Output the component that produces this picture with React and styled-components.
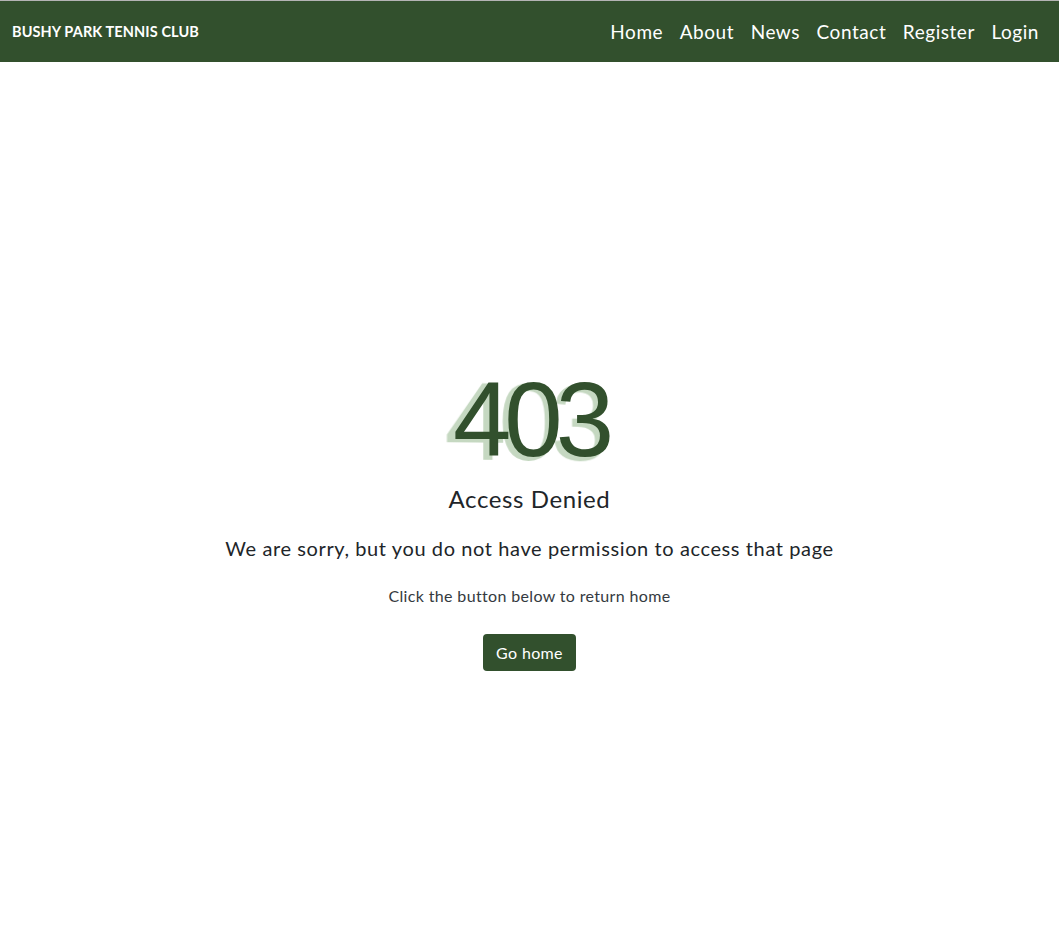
import React from 'react'
import styled, { createGlobalStyle } from 'styled-components'

const GlobalStyle = createGlobalStyle`
  html, body {
    margin: 0;
    padding: 0;
    background: #fff;
  }
  body {
    font-family: Lato, "Open Sans", sans-serif;
    color: #212529;
  }
  * {
    box-sizing: border-box;
  }
`

const Navbar = styled.nav`
  display: flex;
  align-items: center;
  justify-content: space-between;
  height: 62px;
  padding: 0 20px 0 12px;
  background: #32502d;
  border-top: 1px solid #b4b4b4;
`

const Brand = styled.a`
  color: #fff;
  font-size: 14.5px;
  font-weight: 700;
  text-decoration: none;
  letter-spacing: 0.1px;
`

const NavLinks = styled.ul`
  display: flex;
  gap: 16.5px;
  list-style: none;
  margin: 0;
  padding: 0;
`

const NavLink = styled.a`
  color: #fff;
  font-size: 19px;
  letter-spacing: 0.55px;
  text-decoration: none;
`

const Main = styled.main`
  display: flex;
  flex-direction: column;
  align-items: center;
  text-align: center;
  padding-top: 305.3px;
`

const ErrorCode = styled.h1`
  position: relative;
  margin: 0;
  font-family: "Liberation Sans", Arial, sans-serif;
  font-weight: 400;
  line-height: 1;
`

const CodeFront = styled.span`
  position: relative;
  z-index: 1;
  display: block;
  font-size: 105px;
  letter-spacing: -7px;
  padding-left: 1px;
  color: #32502d;
`

// pale copy sitting behind the digits, slightly larger and tilted
const CodeBack = styled.span`
  position: absolute;
  left: -7px;
  bottom: -4.6px;
  font-size: 110px;
  letter-spacing: -8px;
  white-space: nowrap;
  color: #c5d8c1;
  transform-origin: center bottom;
  transform: perspective(600px) rotateY(10deg);
`

const Title = styled.h2`
  margin: 11.4px 0 0;
  font-size: 24px;
  font-weight: 400;
  letter-spacing: 0.6px;
  color: #212529;
`

const Lead = styled.p`
  margin: 23px 0 0;
  font-size: 20px;
  letter-spacing: 0.6px;
  color: #212529;
`

const Hint = styled.p`
  margin: 26px 0 0;
  font-size: 16px;
  letter-spacing: 0.35px;
  color: #343a40;
`

const HomeButton = styled.a`
  display: inline-block;
  margin-top: 29px;
  padding: 0 13.5px;
  height: 37px;
  line-height: 37px;
  border-radius: 4px;
  background: #32502d;
  color: #fff;
  font-size: 16px;
  letter-spacing: 0.35px;
  text-decoration: none;
`

export default function App() {
  const links = ['Home', 'About', 'News', 'Contact', 'Register', 'Login']
  return (
    <>
      <GlobalStyle />
      <Navbar>
        <Brand href="#">BUSHY PARK TENNIS CLUB</Brand>
        <NavLinks>
          {links.map((l) => (
            <li key={l}>
              <NavLink href="#">{l}</NavLink>
            </li>
          ))}
        </NavLinks>
      </Navbar>
      <Main>
        <ErrorCode>
          <CodeBack aria-hidden="true">403</CodeBack>
          <CodeFront>403</CodeFront>
        </ErrorCode>
        <Title>Access Denied</Title>
        <Lead>We are sorry, but you do not have permission to access that page</Lead>
        <Hint>Click the button below to return home</Hint>
        <HomeButton href="#">Go home</HomeButton>
      </Main>
    </>
  )
}
